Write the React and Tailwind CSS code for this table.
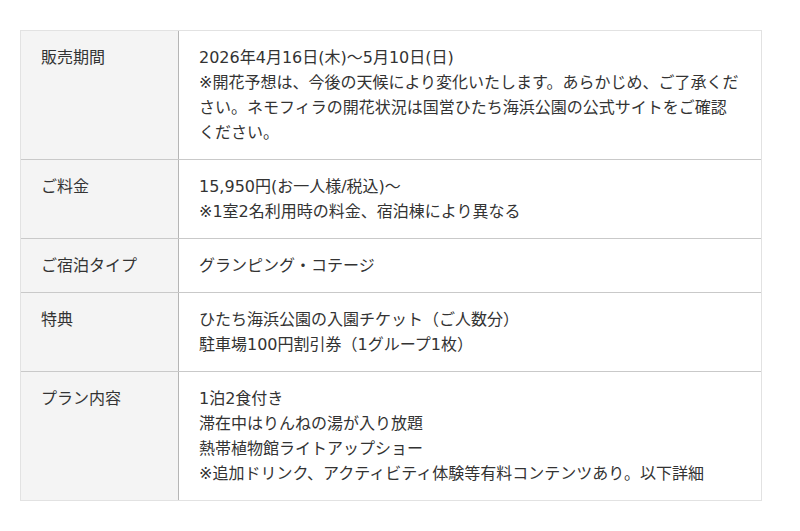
import React from 'react';

const rows = [
    {
        label: '販売期間',
        lines: [
            '2026年4月16日(木)〜5月10日(日)',
            '※開花予想は、今後の天候により変化いたします。あらかじめ、ご了承ください。ネモフィラの開花状況は国営ひたち海浜公園の公式サイトをご確認ください。',
        ],
    },
    {
        label: 'ご料金',
        lines: ['15,950円(お一人様/税込)〜', '※1室2名利用時の料金、宿泊棟により異なる'],
    },
    { label: 'ご宿泊タイプ', lines: ['グランピング・コテージ'] },
    {
        label: '特典',
        lines: ['ひたち海浜公園の入園チケット（ご人数分）', '駐車場100円割引券（1グループ1枚）'],
    },
    {
        label: 'プラン内容',
        lines: [
            '1泊2食付き',
            '滞在中はりんねの湯が入り放題',
            '熱帯植物館ライトアップショー',
            '※追加ドリンク、アクティビティ体験等有料コンテンツあり。以下詳細',
        ],
    },
];

const App = () => {
    return (
        <div
            className="min-h-screen bg-white pt-[30px] px-5 text-[#333] text-[16px] leading-[25px]"
            style={{ fontFamily: '"DejaVu Sans", "Noto Sans CJK JP", sans-serif' }}
        >
            <div className="w-[742px] border border-[#e2e2e2]">
                {rows.map((row, i) => (
                    <div
                        key={row.label}
                        className={`flex ${i > 0 ? 'border-t border-[#c9c9c9]' : ''}`}
                    >
                        <div className="w-[158px] shrink-0 bg-[#f4f4f4] border-r border-[#b5b5b5] pl-5 pr-3 py-[14px]">
                            {row.label}
                        </div>
                        <div className="flex-1 pl-5 pr-5 py-[14px]">
                            {row.lines.map((line) => (
                                <p key={line}>{line}</p>
                            ))}
                        </div>
                    </div>
                ))}
            </div>
        </div>
    );
};

export default App;
